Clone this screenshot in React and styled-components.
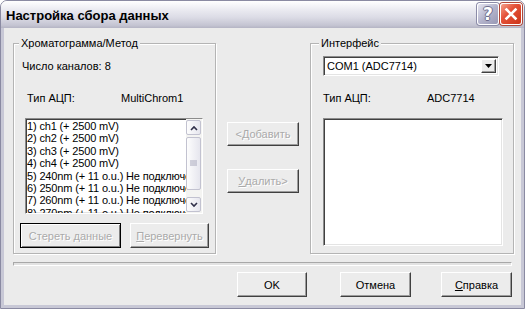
import React from 'react';
import styled, { createGlobalStyle } from 'styled-components';

const GlobalStyle = createGlobalStyle`
	html, body {
		margin: 0;
		padding: 0;
		background: #ffffff;
	}
	body {
		font-family: "Liberation Sans", Arial, sans-serif;
		font-size: 11px;
		color: #000;
	}
`;

const Window = styled.div`
	width: 525px;
	height: 309px;
	box-sizing: border-box;
	display: flex;
	flex-direction: column;
	background: #ebebeb;
	border: 1px solid #8a8aa2;
	border-radius: 7px 7px 0 0;
	overflow: hidden;
`;

const TitleBar = styled.div`
	height: 27px;
	flex: none;
	display: flex;
	align-items: flex-start;
	justify-content: space-between;
	padding: 0 2px 0 5px;
	background: linear-gradient(
		to bottom,
		#ffffff 0%,
		#ececf2 30%,
		#dcdce6 60%,
		#c4c4d2 90%,
		#b4b4c4 100%
	);
`;

const TitleText = styled.div`
	font-family: "Liberation Sans", Arial, sans-serif;
	font-weight: bold;
	font-size: 13px;
	line-height: 15px;
	margin-top: 7px;
	color: #000;
`;

const TitleButtons = styled.div`
	display: flex;
	gap: 1px;
	margin-top: 2px;
`;

const CaptionButton = styled.div`
	width: 22px;
	height: 22px;
	box-sizing: border-box;
	border: 1px solid #ffffff;
	border-radius: 3px;
	display: flex;
	align-items: center;
	justify-content: center;
	background: ${(p) =>
		p.$close
			? 'linear-gradient(135deg, #f4a08a 0%, #e4523a 40%, #cc3418 100%)'
			: 'linear-gradient(135deg, #e4e4f0 0%, #b4b4cc 50%, #9898b4 100%)'};
	box-shadow: 0 0 0 1px ${(p) => (p.$close ? '#b0483a' : '#8c8ca8')};
`;

const HelpGlyph = styled.span`
	font-family: "DejaVu Sans", Verdana, sans-serif;
	font-weight: bold;
	font-size: 17px;
	line-height: 18px;
	color: #ffffff;
	text-shadow: -1px 0 #6c6c8c, 1px 0 #6c6c8c, 0 -1px #6c6c8c, 0 1px #6c6c8c;
`;

const Frame = styled.div`
	flex: 1;
	display: flex;
	flex-direction: column;
	border: solid #c8c8d6;
	border-width: 0 3px 3px 3px;
`;

const Body = styled.div`
	flex: 1;
	display: flex;
	flex-direction: column;
	padding: 15px 7px 0 9px;
`;

const Columns = styled.div`
	display: flex;
	gap: 11px;
	align-items: flex-start;
`;

const GroupBox = styled.div`
	position: relative;
	width: ${(p) => p.$width}px;
	height: 211px;
	box-sizing: border-box;
	border: 1px solid #b4b4b4;
	box-shadow: inset 1px 1px 0 #ffffff, 1px 1px 0 #ffffff;
	display: flex;
	flex-direction: column;
`;

const Legend = styled.span`
	position: absolute;
	top: -7px;
	left: ${(p) => p.$left}px;
	padding: 0 2px;
	line-height: 13px;
	background: #ebebeb;
`;

const Label = styled.div`
	line-height: 13px;
	margin: ${(p) => p.$top}px 0 0 ${(p) => p.$left}px;
	white-space: nowrap;
`;

const InfoRow = styled.div`
	display: flex;
	line-height: 13px;
	margin: ${(p) => p.$top}px 0 0 ${(p) => p.$left}px;
`;

const InfoKey = styled.span`
	width: ${(p) => p.$width}px;
	flex: none;
`;

const ListBox = styled.div`
	width: ${(p) => p.$width}px;
	height: ${(p) => p.$height}px;
	box-sizing: border-box;
	margin: ${(p) => p.$top}px 0 0 ${(p) => p.$left}px;
	background: #ffffff;
	border: 1px solid;
	border-color: #8c8c8c #ffffff #ffffff #8c8c8c;
	box-shadow: inset 1px 1px 0 #404040, inset -1px -1px 0 #e4e4e4;
	display: flex;
	overflow: hidden;
`;

const Items = styled.div`
	flex: 1;
	min-width: 0;
	padding: 1px 0 0 1px;
	overflow: hidden;
`;

const Item = styled.div`
	line-height: 12.4px;
	white-space: nowrap;
	overflow: hidden;
	letter-spacing: -0.15px;
`;

const ScrollBar = styled.div`
	width: 16px;
	flex: none;
	display: flex;
	flex-direction: column;
	padding: 1px 1px 1px 0;
	box-sizing: border-box;
	background: #f4f4f2;
	gap: 2px;
`;

const ScrollButton = styled.div`
	height: 15px;
	flex: none;
	box-sizing: border-box;
	border: 1px solid #c2c2d0;
	border-radius: 2px;
	background: linear-gradient(to right, #fdfdfd, #e6e6ee);
	display: flex;
	align-items: center;
	justify-content: center;
`;

const Thumb = styled(ScrollButton)`
	height: 53px;
`;

const Track = styled.div`
	flex: 1;
`;

const ButtonRow = styled.div`
	display: flex;
	gap: 9px;
	margin: ${(p) => p.$top}px 0 0 ${(p) => p.$left}px;
`;

const Button = styled.div`
	width: ${(p) => p.$width}px;
	height: ${(p) => p.$height || 25}px;
	box-sizing: border-box;
	display: flex;
	align-items: center;
	justify-content: center;
	background: #ececec;
	border: 1px solid;
	border-color: ${(p) =>
		p.$default ? '#000000' : '#ffffff #404040 #404040 #ffffff'};
	box-shadow: ${(p) =>
		p.$default
			? 'inset 1px 1px 0 #ffffff, inset -1px -1px 0 #808080'
			: 'inset -1px -1px 0 #9c9c9c'};
	color: ${(p) => (p.$disabled ? '#aaaaaa' : '#000000')};
	text-shadow: ${(p) => (p.$disabled ? '1px 1px 0 #ffffff' : 'none')};
	white-space: nowrap;
	margin-top: ${(p) => p.$top || 0}px;
	margin-right: ${(p) => p.$right || 0}px;
`;

const Key = styled.span`
	text-decoration: underline;
`;

const Middle = styled.div`
	width: 72px;
	display: flex;
	flex-direction: column;
	padding-top: 79px;
`;

const Combo = styled.div`
	width: 176px;
	height: 20px;
	box-sizing: border-box;
	margin: 12px 0 0 12px;
	background: #ffffff;
	border: 1px solid;
	border-color: #8c8c8c #ffffff #ffffff #8c8c8c;
	box-shadow: inset 1px 1px 0 #404040, inset -1px -1px 0 #e4e4e4;
	display: flex;
	align-items: center;
	padding: 2px;
`;

const ComboText = styled.span`
	flex: 1;
	padding-left: 1px;
	line-height: 13px;
`;

const ComboArrow = styled.div`
	width: 15px;
	height: 14px;
	box-sizing: border-box;
	background: #ececec;
	border: 1px solid;
	border-color: #ffffff #404040 #404040 #ffffff;
	box-shadow: inset -1px -1px 0 #9c9c9c;
	display: flex;
	align-items: center;
	justify-content: center;
`;

const Separator = styled.div`
	height: 4px;
	box-sizing: border-box;
	margin: 8px 2px 0 0;
	border: 1px solid;
	border-color: #a8a8a8 #ffffff #ffffff #a8a8a8;
	background: #e2e2e2;
`;

const Footer = styled.div`
	display: flex;
	justify-content: flex-end;
	gap: 30px;
	margin: 6px 2px 0 0;
`;

const Chevron = ({ up }) => (
	<svg width="8" height="6" viewBox="0 0 8 6">
		<path
			d={up ? 'M1 5 L4 2 L7 5' : 'M1 1 L4 4 L7 1'}
			fill="none"
			stroke="#30304a"
			strokeWidth="1.6"
		/>
	</svg>
);

const Grip = () => (
	<svg width="7" height="7" viewBox="0 0 7 7">
		<path d="M0 1h7M0 3h7M0 5h7" stroke="#a8a8bc" strokeWidth="1" />
	</svg>
);

const channels = [
	'1) ch1 (+ 2500 mV)',
	'2) ch2 (+ 2500 mV)',
	'3) ch3 (+ 2500 mV)',
	'4) ch4 (+ 2500 mV)',
	'5) 240nm (+ 11 o.u.) Не подключен',
	'6) 250nm (+ 11 o.u.) Не подключен',
	'7) 260nm (+ 11 o.u.) Не подключен',
	'8) 270nm (+ 11 o.u.) Не подключен',
];

const App = () => (
	<>
		<GlobalStyle />
		<Window>
			<TitleBar>
				<TitleText>Настройка сбора данных</TitleText>
				<TitleButtons>
					<CaptionButton>
						<HelpGlyph>?</HelpGlyph>
					</CaptionButton>
					<CaptionButton $close>
						<svg width="14" height="14" viewBox="0 0 14 14">
							<path
								d="M2.5 2.5 L11.5 11.5 M11.5 2.5 L2.5 11.5"
								stroke="#ffffff"
								strokeWidth="2.6"
								strokeLinecap="square"
							/>
						</svg>
					</CaptionButton>
				</TitleButtons>
			</TitleBar>
			<Frame>
				<Body>
					<Columns>
						<GroupBox $width={203}>
							<Legend $left={5}>Хроматограмма/Метод</Legend>
							<Label $top={16} $left={8}>
								Число каналов: 8
							</Label>
							<InfoRow $top={19} $left={13}>
								<InfoKey $width={94}>Тип АЦП:</InfoKey>
								<span>MultiChrom1</span>
							</InfoRow>
							<ListBox $width={178} $height={96} $top={13} $left={11}>
								<Items>
									{channels.map((c) => (
										<Item key={c}>{c}</Item>
									))}
								</Items>
								<ScrollBar>
									<ScrollButton>
										<Chevron up />
									</ScrollButton>
									<Thumb>
										<Grip />
									</Thumb>
									<Track />
									<ScrollButton>
										<Chevron />
									</ScrollButton>
								</ScrollBar>
							</ListBox>
							<ButtonRow $top={9} $left={6}>
								<Button $width={101} $default $disabled>
									Стереть данные
								</Button>
								<Button $width={79} $disabled>
									<Key>П</Key>еревернуть
								</Button>
							</ButtonRow>
						</GroupBox>
						<Middle>
							<Button $width={72} $height={24} $disabled>
								&lt;<Key>Д</Key>обавить
							</Button>
							<Button $width={72} $height={24} $top={23} $disabled>
								<Key>У</Key>далить&gt;
							</Button>
						</Middle>
						<GroupBox $width={204}>
							<Legend $left={8}>Интерфейс</Legend>
							<Combo>
								<ComboText>COM1 (ADC7714)</ComboText>
								<ComboArrow>
									<svg width="7" height="4" viewBox="0 0 7 4">
										<path d="M0 0 H7 L3.5 4 Z" fill="#000" />
									</svg>
								</ComboArrow>
							</Combo>
							<InfoRow $top={16} $left={12}>
								<InfoKey $width={104}>Тип АЦП:</InfoKey>
								<span>ADC7714</span>
							</InfoRow>
							<ListBox $width={180} $height={128} $top={13} $left={12} />
						</GroupBox>
					</Columns>
					<Separator />
					<Footer>
						<Button $width={70} $right={3}>
							OK
						</Button>
						<Button $width={71}>Отмена</Button>
						<Button $width={71}>
							<Key>С</Key>правка
						</Button>
					</Footer>
				</Body>
			</Frame>
		</Window>
	</>
);

export default App;
